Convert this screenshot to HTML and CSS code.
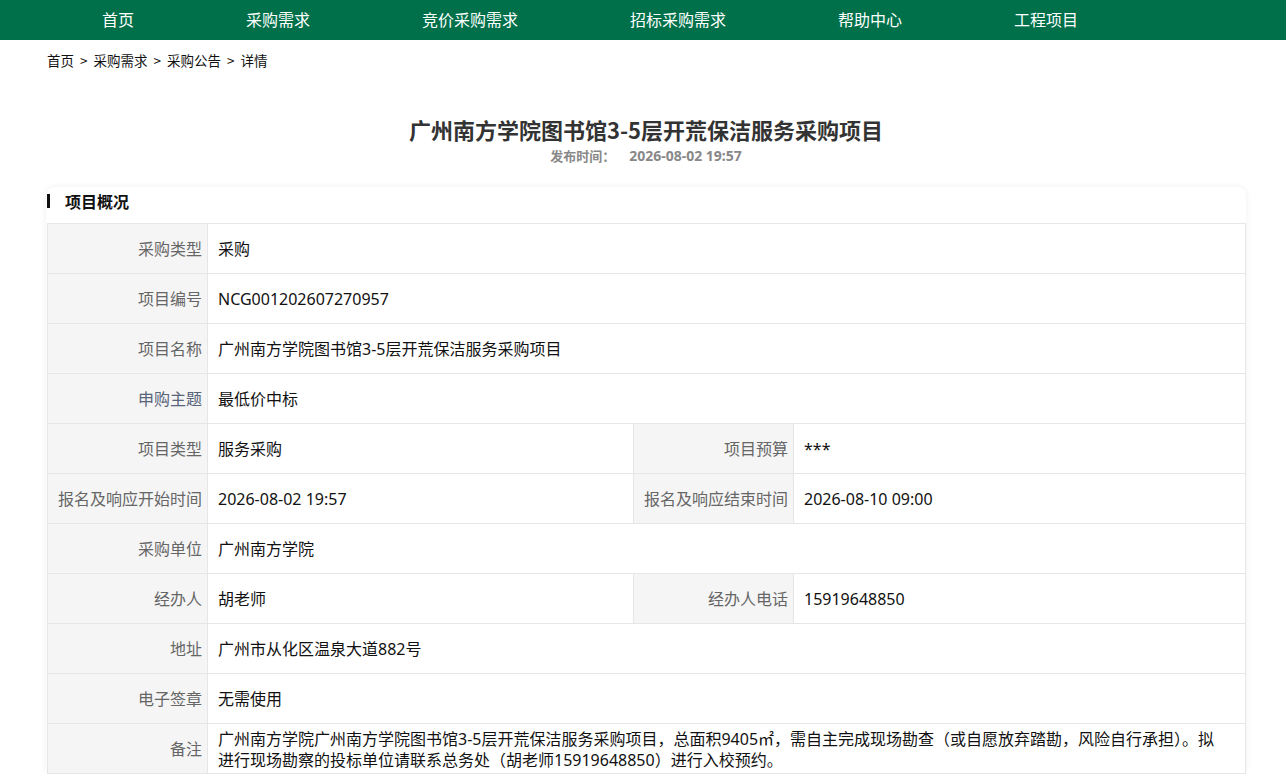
FILE: index.html
```html
<!DOCTYPE html>
<html lang="zh-CN">
<head>
<meta charset="utf-8">
<title>详情</title>
<link rel="stylesheet" href="styles.css">
</head>
<body>
<nav class="topnav">
  <ul class="topnav-list">
    <li>首页</li>
    <li>采购需求</li>
    <li>竞价采购需求</li>
    <li>招标采购需求</li>
    <li>帮助中心</li>
    <li>工程项目</li>
  </ul>
</nav>
<main class="container">
  <div class="crumbs">首页<span class="sep">&gt;</span>采购需求<span class="sep">&gt;</span>采购公告<span class="sep">&gt;</span>详情</div>
  <h1 class="title">广州南方学院图书馆3-5层开荒保洁服务采购项目</h1>
  <div class="pubtime"><span class="pub-label">发布时间：</span><span class="pub-val">2026-08-02 19:57</span></div>
  <section class="card">
    <div class="card-head"><span class="bar"></span>项目概况</div>
    <div class="grid">
      <div class="lab">采购类型</div><div class="val span3">采购</div>
      <div class="lab">项目编号</div><div class="val span3">NCG001202607270957</div>
      <div class="lab">项目名称</div><div class="val span3">广州南方学院图书馆3-5层开荒保洁服务采购项目</div>
      <div class="lab lab-blue">申购主题</div><div class="val span3">最低价中标</div>
      <div class="lab">项目类型</div><div class="val">服务采购</div><div class="lab">项目预算</div><div class="val">***</div>
      <div class="lab">报名及响应开始时间</div><div class="val">2026-08-02 19:57</div><div class="lab">报名及响应结束时间</div><div class="val">2026-08-10 09:00</div>
      <div class="lab">采购单位</div><div class="val span3">广州南方学院</div>
      <div class="lab">经办人</div><div class="val">胡老师</div><div class="lab">经办人电话</div><div class="val">15919648850</div>
      <div class="lab">地址</div><div class="val span3">广州市从化区温泉大道882号</div>
      <div class="lab">电子签章</div><div class="val span3">无需使用</div>
      <div class="lab">备注</div><div class="val span3">广州南方学院广州南方学院图书馆3-5层开荒保洁服务采购项目，总面积9405㎡，需自主完成现场勘查（或自愿放弃踏勘，风险自行承担）。拟进行现场勘察的投标单位请联系总务处（胡老师15919648850）进行入校预约。</div>
    </div>
  </section>
</main>
</body>
</html>
```

FILE: styles.css
```css
* { box-sizing: border-box; }
html, body { margin: 0; padding: 0; background: #fff; }
body {
  font-family: "Microsoft YaHei", "Noto Sans CJK SC", "Noto Sans", sans-serif;
  color: #222;
}
.topnav {
  background: #00704a;
  height: 40px;
}
.topnav-list {
  list-style: none;
  margin: 0;
  padding: 0 0 0 102px;
  display: flex;
  gap: 112px;
  height: 40px;
  align-items: flex-start;
}
.topnav-list li {
  color: #fff;
  font-size: 16px;
  line-height: 38px;
}
.container {
  width: 1200px;
  margin: 0 0 0 46px;
  padding-top: 10px;
}
.crumbs {
  font-size: 13.5px;
  line-height: 20px;
  color: #111;
  padding-left: 1px;
}
.sep {
  display: inline-block;
  margin: 0 6px;
}
.title {
  margin: 44px 0 0;
  text-align: center;
  font-size: 22px;
  line-height: 30px;
  font-weight: bold;
  color: #333;
}
.pubtime {
  margin-top: 2px;
  text-align: center;
  font-size: 13px;
  line-height: 20px;
  font-weight: bold;
  color: #888;
}
.pub-label { margin-right: 14px; }
.pub-val {
  font-family: "Noto Sans", "Noto Sans CJK SC", sans-serif;
  font-size: 14px;
}
.card {
  margin-top: 21px;
  background: #fff;
  border-radius: 8px;
  box-shadow: 0 0 6px rgba(0, 0, 0, 0.07);
}
.card-head {
  height: 36px;
  display: flex;
  align-items: center;
  padding-bottom: 8px;
  font-size: 16px;
  font-weight: bold;
  color: #111;
  padding-left: 1px;
}
.bar {
  display: inline-block;
  width: 3px;
  height: 14px;
  background: #111;
  margin-right: 15px;
}
.grid {
  display: grid;
  grid-template-columns: 159px 425px 159px 1fr;
  gap: 1px;
  background: #e6e6e8;
  border: 1px solid #e6e6e8;
  margin-left: 1px;
  width: 1199px;
}
.lab, .val {
  min-height: 49px;
  display: flex;
  align-items: center;
  font-size: 16px;
  line-height: 21px;
}
.lab {
  background: #f5f5f5;
  color: #666;
  justify-content: flex-end;
  padding-right: 5px;
  text-align: right;
}
.lab-blue { color: #586479; }
.val {
  background: #fff;
  color: #111;
  padding: 4px 10px 2px;
  font-family: "Noto Sans", "Noto Sans CJK SC", sans-serif;
}
.span3 {
  grid-column: span 3;
  padding-right: 20px;
}
```
